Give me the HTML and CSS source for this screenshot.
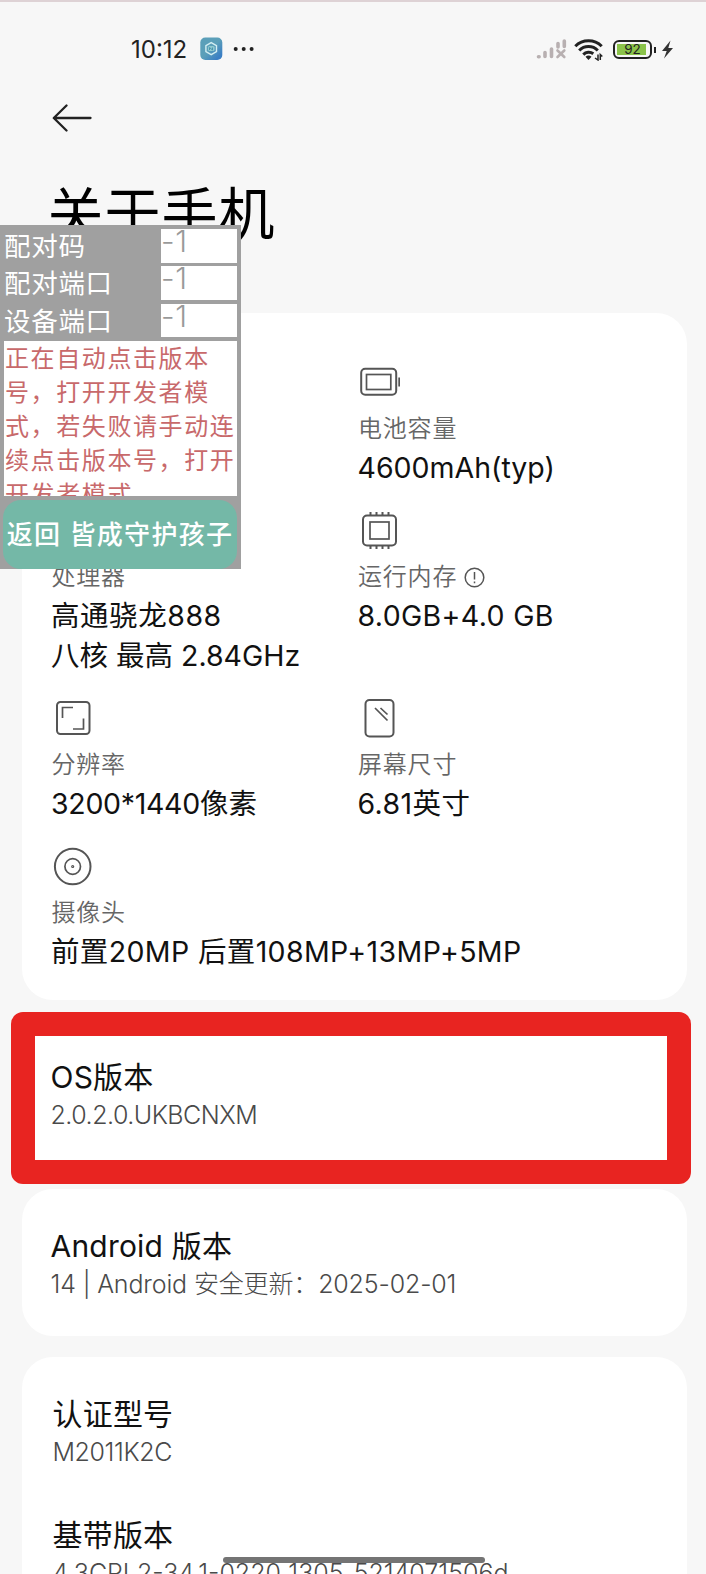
FILE: index.html
```html
<!DOCTYPE html>
<html lang="zh-CN">
<head>
<meta charset="utf-8">
<title>关于手机</title>
<link rel="stylesheet" href="styles.css">
</head>
<body>
<div class="screen">
  <header class="status">
    <span class="clock">10:12</span>
    <svg class="app" width="23" height="24" viewBox="0 0 23 24">
      <defs><linearGradient id="g" x1="0" y1="0" x2="1" y2="1"><stop offset=".5" stop-color="#5b9fb9"/><stop offset=".85" stop-color="#3b7fc4"/></linearGradient></defs>
      <rect x=".3" y=".5" width="22" height="22.5" rx="5" fill="url(#g)"/>
      <path d="M11.2 5.6l5.3 3v6l-5.3 3-5.3-3v-6z" fill="none" stroke="#d3eef2" stroke-width="1.4"/>
      <rect x="8" y="9" width="6.6" height="5" rx="1.5" fill="#8fc9cf"/><path d="M9.5 13v-2.5l3 2.500v-2.500" fill="none" stroke="#4b95ae"/>
    </svg>
    <svg class="dots" width="22" height="6" viewBox="0 0 22 6" fill="#222"><circle cx="2.700" cy="3" r="2"/><circle cx="10.700" cy="3" r="2"/><circle cx="18.600" cy="3" r="2"/></svg>
    <span class="grow"></span>
    <svg class="signal" width="31" height="21" viewBox="0 0 31 21" fill="none" stroke="#b8b0b1" stroke-width="3.600" stroke-linecap="round">
      <path d="M2.500 17.800h.6M9 17.500v-4M15.500 17.500v-7.500M22 8v-3.500M28.300 7.500v-5.500"/><path d="M21.500 11.500l6.800 6.500M28.300 11.500l-6.800 6.500" stroke-width="2.600"/>
    </svg>
    <svg class="wifi" width="30" height="23" viewBox="0 0 30 23" fill="none" stroke="#222" stroke-width="3">
      <path d="M1.300 8.200a18.500 18.500 0 0 1 26.400 0M5.200 12.500a13 13 0 0 1 18.600 0M9.300 16.600a7.500 7.500 0 0 1 10-.8"/>
      <path d="M11.500 18.800q3-2.500 6 0l-3 3.200z" fill="#222" stroke="none"/>
      <path d="M24 16.500v5.500l-3-2M26.300 22v-5.500l2 2" stroke-width="1.500"/>
    </svg>
    <span class="battery"><span class="charge">92</span></span>
    <svg class="bolt" width="13" height="19" viewBox="0 0 13 19"><path d="M9.500.5L1 11h4.700L3 18.500 12 8H7.300z" fill="#333"/></svg>
  </header>

  <svg class="back" width="40" height="28" viewBox="0 0 40 28" fill="none" stroke="#222" stroke-width="2.300" stroke-linecap="round" stroke-linejoin="round"><path d="M14.500 1.500L1.800 14l12.700 12.500M2.500 14H38.500"/></svg>
  <h1>关于手机</h1>

  <section class="card specs">
    <div class="cell"></div>
    <div class="cell">
      <svg class="icon" width="42" height="40" viewBox="0 0 42 40"><rect x="3.200" y="6.700" width="35" height="26" rx="4"/><rect class="thin" x="8.500" y="12.500" width="24.300" height="15"/><path d="M41.300 15.500v9"/></svg>
      <div class="label">电池容量</div>
      <div class="value v-mah">4600mAh(typ)</div>
    </div>
    <div class="cell">
      <div class="icon"></div>
      <div class="label">处理器</div>
      <div class="value"><span class="v-cpu">高通骁龙888</span><br>八核 最高 2.84GHz</div>
    </div>
    <div class="cell">
      <svg class="icon" width="42" height="40" viewBox="0 0 42 40"><rect x="5" y="5.500" width="33" height="30" rx="4"/><rect class="thin" x="12" y="12" width="19" height="17"/><path d="M12.500 5V2M18.500 5V2M24.500 5V2M30.500 5V2M12.500 36v3M18.500 36v3M24.500 36v3M30.500 36v3"/></svg>
      <div class="label">运行内存<svg class="info" width="21" height="21" viewBox="0 0 21 21"><circle cx="10.500" cy="10.500" r="9.300"/><path d="M10.500 5v7.500M10.500 14.500v1.800"/></svg></div>
      <div class="value v-ram">8.0GB+4.0 GB</div>
    </div>
    <div class="cell">
      <svg class="icon" width="42" height="40" viewBox="0 0 42 40"><rect x="5" y="4" width="32.500" height="32" rx="3.500"/><path class="thin" d="M10.500 20V9.500h10.500M31.500 20.500V31H21"/></svg>
      <div class="label">分辨率</div>
      <div class="value"><span class="v-res">3200*1440</span>像素</div>
    </div>
    <div class="cell">
      <svg class="icon" width="42" height="40" viewBox="0 0 42 40"><rect x="7.500" y="2" width="28" height="36.500" rx="4"/><path class="thin" d="M17 10l12.500 12.500M22.500 10l7 6.500"/></svg>
      <div class="label">屏幕尺寸</div>
      <div class="value v-size">6.81英寸</div>
    </div>
    <div class="cell wide">
      <svg class="icon" width="42" height="40" viewBox="0 0 42 40"><circle cx="20.700" cy="20.500" r="17.800"/><circle class="thin" cx="20.700" cy="20.500" r="7.800"/><circle cx="20.700" cy="20.500" r=".6"/></svg>
      <div class="label">摄像头</div>
      <div class="value v-cam">前置20MP 后置108MP+13MP+5MP</div>
    </div>
  </section>

  <section class="marked">
    <h2>OS版本</h2>
    <p class="s-os">2.0.2.0.UKBCNXM</p>
  </section>

  <section class="card android">
    <h2 class="t-android">Android 版本</h2>
    <p class="s-android">14 | Android 安全更新：2025-02-01</p>
  </section>

  <section class="card model">
    <h2>认证型号</h2>
    <p class="s-model">M2011K2C</p>
    <h2 class="next">基带版本</h2>
    <p class="s-base">4.3CPL2-34.1-0220_1305_5214071506d</p>
  </section>

  <aside class="panel">
    <div class="field"><span>配对码</span><b>-1</b></div>
    <div class="field"><span>配对端口</span><b>-1</b></div>
    <div class="field"><span>设备端口</span><b>-1</b></div>
    <div class="message">正在自动点击版本<br>号，打开开发者模<br>式，若失败请手动连<br>续点击版本号，打开<br>开发者模式</div>
    <div class="return">返回 皆成守护孩子</div>
  </aside>
  <div class="homebar"></div>
</div>
</body>
</html>
```
FILE: styles.css
```css
* { box-sizing: border-box; }
body, h1, h2, p { margin: 0; font-weight: 400; }
body { font-family: Inter, "Noto Sans CJK SC", sans-serif; background: #f7f7f7; color: #111; }
.screen { position: relative; width: 706px; height: 1574px; overflow: hidden; border-top: 2px solid #ded2d5; display: flex; flex-direction: column; white-space: nowrap; }
svg { display: block; flex: none; }

.status { display: flex; align-items: center; height: 30px; margin-top: 32px; padding: 0 32.500px 0 131px; flex: none; }
.clock { font-size: 24px; width: 69px; line-height: 30px; padding-top: 2px; color: #222; }
.dots { margin-left: 10px; }
.grow { flex: 1; }
.wifi { margin-left: 7px; }
.battery { position: relative; width: 39px; height: 19px; border: 2px solid #222; border-radius: 6px; padding: 2px; margin-left: 9px; }
.battery::after { content: ""; position: absolute; right: -6px; top: 5px; width: 2px; height: 6px; background: #222; }
.charge { display: block; width: 29px; height: 11px; background: #8bc34a; font-size: 13.500px; line-height: 11.500px; text-align: center; color: #222; padding-left: 3px; }
.bolt { margin-left: 9px; }

.back { margin: 40px 0 0 52px; }
h1 { font-size: 56px; line-height: 70px; letter-spacing: 1px; margin: 47px 0 0 47.500px; color: #000; height: 70px; flex: none; }

.card { background: #fff; border-radius: 31px; margin: 0 19.500px 0 21.500px; flex: none; }
.specs { margin-top: 64px; height: 687px; padding: 48.800px 0 0 30px; display: grid; grid-template-columns: 306.500px 1fr; grid-template-rows: 125px 164px 125px 125px; row-gap: 23.500px; }
.wide { grid-column: span 2; }
.icon { height: 40px; margin-bottom: 11px; fill: none; stroke: #555; stroke-width: 2; }
.icon .thin { stroke-width: 1.700; }
.label { display: flex; align-items: center; font-size: 24px; letter-spacing: .8px; line-height: 32px; height: 32px; margin-bottom: 3px; font-weight: 350; color: #666; }
.info { margin-left: 7px; fill: none; stroke: #555; stroke-width: 1.500; }
.value { font-size: 28.500px; line-height: 39.500px; margin-left: -.5px; }
.v-cpu { letter-spacing: .55px; }
.v-ram { letter-spacing: .35px; }
.v-res { letter-spacing: -.3px; }
.v-size { letter-spacing: .4px; }
.v-cam { letter-spacing: .37px; }

.marked { width: 680px; height: 172px; margin: 12px 0 0 10.500px; border: 24px solid #e82421; border-radius: 12px; background: #fff; padding: 20px 0 0 16px; flex: none; }
h2 { font-size: 30px; line-height: 42px; height: 42px; letter-spacing: .2px; }
p { font-size: 25px; line-height: 34px; height: 34px; font-weight: 300; color: #4a4a4a; }
.s-os { letter-spacing: -.5px; }
.android { margin-top: 5px; height: 147px; padding: 35.500px 0 0 29px; }
.s-android { letter-spacing: -.15px; font-weight: 320; }
.model { margin-top: 21px; height: 260px; padding: 36px 0 0 31px; }
.s-model { letter-spacing: -.4px; }
.next { margin-top: 45px; }

.panel { position: absolute; left: 0; top: 223px; width: 241px; height: 344px; background: #a0a0a0; padding: 4px 4px 0; }
.field { display: flex; justify-content: space-between; height: 37.300px; color: #fff; font-size: 26.500px; letter-spacing: .7px; line-height: 34px; }
.field b { width: 76px; height: 33.500px; background: #fff; color: #999; font-weight: 300; font-size: 30px; line-height: 25px; }
.message { height: 155px; background: #fff; color: #c8696b; font-size: 24px; letter-spacing: 1.600px; line-height: 34px; overflow: hidden; padding: 1px 0 0 1px; }
.return { height: 69px; margin: 4px 0 0 -1px; border-radius: 18px; background: #74b8a7; color: #fff; font-size: 26px; letter-spacing: 1.300px; line-height: 70px; text-align: center; font-weight: 500; }
.homebar { position: absolute; left: 223px; top: 1555px; width: 262px; height: 6px; border-radius: 3px; background: #747474; }
```
